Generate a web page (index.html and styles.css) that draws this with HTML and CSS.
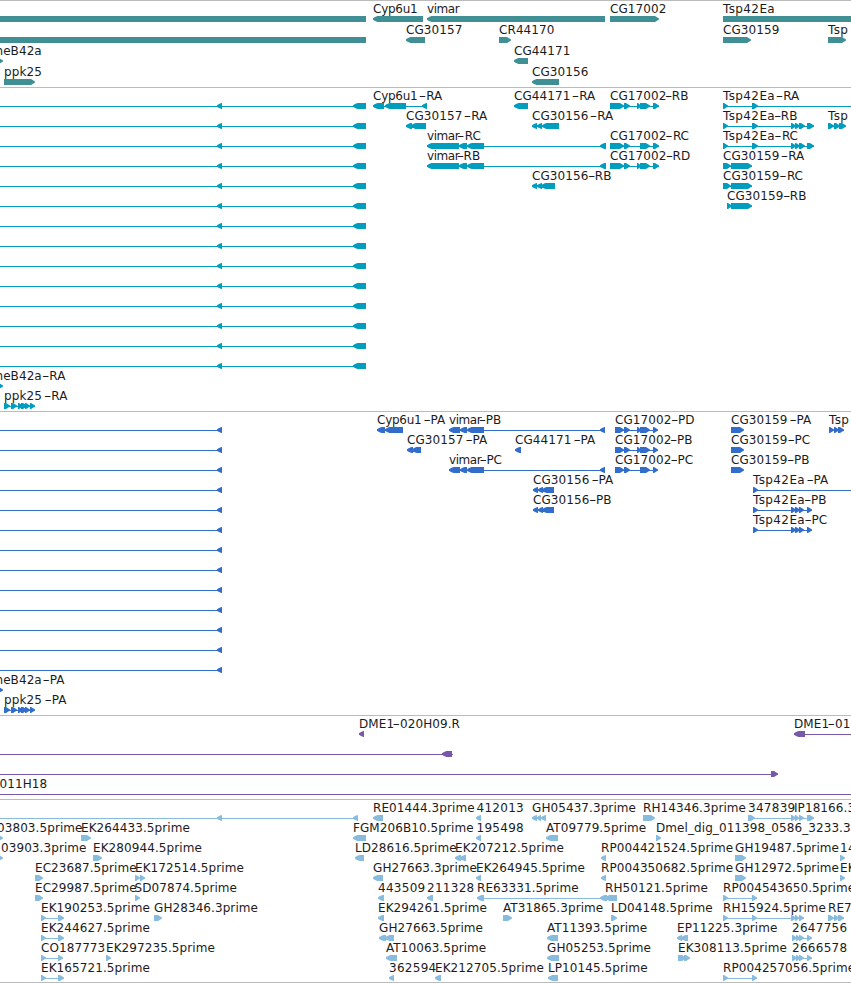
FILE: index.html
```html
<!DOCTYPE html>
<html lang="en">
<head>
<meta charset="utf-8">
<title>Genome browser</title>
<link rel="stylesheet" href="styles.css">
</head>
<body>
<main class="browser" id="browser"></main>
<script src="tracks.js"></script>
</body>
</html>
```

FILE: styles.css
```css
body {
  margin: 0;
  background: #fff;
}

.browser {
  display: flex;
  flex-direction: column;
  width: 851px;
  height: 983px;
  overflow: hidden;
}

.track {
  display: block;
  flex: none;
  box-sizing: border-box;
  width: 851px;
  border-top: 1px solid #bbb;
  overflow: hidden;
}

.track:last-child {
  border-bottom: 1px solid #bbb;
}

.track text {
  font: 12px "DejaVu Sans", sans-serif;
  fill: #1c1c1c;
  letter-spacing: 0.08px;
  white-space: pre;
}

.track .digits { letter-spacing: 0.28px; }
.track .tsp { letter-spacing: 0.38px; }
.track .vimar { letter-spacing: -0.45px; }
.track .cyp { letter-spacing: -0.25px; }
.track .suffix { letter-spacing: 0; text-anchor: end; }

.genes { color: #3f8f95; }
.transcripts { color: #009dbf; }
.proteins { color: #336dcc; }
.clones { color: #7759a8; }
.ests { color: #88bcde; }

.glyph { fill: currentColor; }
.intron { fill: currentColor; shape-rendering: crispEdges; }
```

FILE: tracks.js
```js
// Feature: [row, label, labelX, strand, exons, lineStart, lineEnd]
// strand: "<" reverse, ">" forward, "=" plain bar running off screen.
const A = 851;
const repeat = (n, make) => Array.from({ length: n }, (_, i) => make(i));
const ppk = [[4,10],[11,17],[18,23],[21,27],[25,30],[30,35]];
const cg17 = [[610,624],[624,630],[637,641],[640,650],[653,659]];
const cg17c = [[610,624],[624,630],[640,650],[653,659]];
const cg17p = [[615,624],[624,630],[637,641],[640,650],[653,658]];
const cg17pc = [[615,624],[624,630],[640,650],[653,658]];
const tsp = [[723,728],[752,758],[791,796],[795,800],[799,805],[807,814]];
const tspP = [[753,758],[791,796],[795,800],[799,804],[807,812]];
const vimar = [[427,459],[459,467],[467,484],[600,606]];
const vimarP = [[449,460],[460,467],[467,484],[600,605]];
const cg56p = [[533,538],[538,543],[542,554]];
const dist = [[792,797],[796,800],[799,804],[807,812]];

const tracks = [
  { name: "genes", height: 87, pitch: 21, features: [
    [0,"",0,"=",[[0,366]]],
    [0,"Cyp6u1",373,"<",[[373,423]]],
    [0,"vimar",427,"<",[[427,605]]],
    [0,"CG17002",610,">",[[610,659]]],
    [0,"Tsp42Ea",723,"=",[[723,A]]],
    [1,"",0,"=",[[0,366]]],
    [1,"CG30157",406,"<",[[406,425]]],
    [1,"CR44170",499,">",[[499,511]]],
    [1,"CG30159",723,">",[[723,751]]],
    [1,"Tsp",828,">",[[828,846]]],
    [2,"CheB42a",-13,">",[[-2,3]]],
    [2,"CG44171",514,"<",[[514,528]]],
    [3,"ppk25",4,">",[[4,35]]],
    [3,"CG30156",532,"<",[[532,559]]]
  ]},
  { name: "transcripts", height: 324, pitch: 20, features: [
    ...repeat(14, i => [i,"",0,"<",[[217,222],[353,366]],0,366]),
    [0,"Cyp6u1-RA",373,"<",[[373,384],[385,406],[422,427]]],
    [0,"CG44171-RA",514,"<",[[514,528]]],
    [0,"CG17002-RB",610,">",cg17],
    [0,"Tsp42Ea-RA",723,">",[[723,728],[752,758]],723,A],
    [1,"CG30157-RA",406,"<",[[406,412],[411,426]]],
    [1,"CG30156-RA",532,"<",[[532,537],[537,542],[542,559]]],
    [1,"Tsp42Ea-RB",723,">",tsp],
    [1,"Tsp",828,">",[[828,834],[834,840],[839,846]]],
    [2,"vimar-RC",427,"<",vimar],
    [2,"CG17002-RC",610,">",cg17c],
    [2,"Tsp42Ea-RC",723,">",tsp],
    [3,"vimar-RB",427,"<",vimar],
    [3,"CG17002-RD",610,">",cg17],
    [3,"CG30159-RA",723,">",[[723,731],[731,752]]],
    [4,"CG30156-RB",532,"<",[[532,537],[537,542],[541,555]]],
    [4,"CG30159-RC",723,">",[[723,731],[731,752]]],
    [5,"CG30159-RB",727,">",[[727,732],[731,752]]],
    [14,"CheB42a-RA",-13,">",[[-2,3]]],
    [15,"ppk25-RA",4,">",ppk]
  ]},
  { name: "proteins", height: 304, pitch: 20, features: [
    ...repeat(13, i => [i,"",0,"<",[[217,222]],0,222]),
    [0,"Cyp6u1-PA",377,"<",[[377,385],[385,403]]],
    [0,"vimar-PB",449,"<",vimarP],
    [0,"CG17002-PD",615,">",cg17p],
    [0,"CG30159-PA",731,">",[[731,744]]],
    [0,"Tsp",829,">",[[829,834],[834,839],[838,844]]],
    [1,"CG30157-PA",407,"<",[[407,413],[412,421]]],
    [1,"CG44171-PA",515,"<",[[515,521]]],
    [1,"CG17002-PB",615,">",cg17p],
    [1,"CG30159-PC",731,">",[[731,744]]],
    [2,"vimar-PC",449,"<",vimarP],
    [2,"CG17002-PC",615,">",cg17pc],
    [2,"CG30159-PB",731,">",[[731,744]]],
    [3,"CG30156-PA",533,"<",cg56p],
    [3,"Tsp42Ea-PA",753,">",[[753,758]],753,A],
    [4,"CG30156-PB",533,"<",cg56p],
    [4,"Tsp42Ea-PB",753,">",tspP],
    [5,"Tsp42Ea-PC",753,">",tspP],
    [13,"CheB42a-PA",-13,">",[[-2,3]]],
    [14,"ppk25-PA",4,">",ppk]
  ]},
  { name: "clones", height: 84, pitch: 20, features: [
    [0,"DME1-020H09.R",359,"<",[[359,364]]],
    [0,"DME1-01",794,"<",[[794,805]],794,A],
    [1,"",0,"<",[[442,452]],0,453],
    [2,"",0,">",[[771,778]],0,778],
    [3,"011H18",-0.5,"=",[],0,A]
  ]},
  { name: "ests", height: 184, pitch: 20, features: [
    [0,"",0,"<",[[217,222],[353,358]],0,358],
    [0,"RE01444.3prime",373,"<",[[373,383]]],
    [0,"412013",476.5,"<",[[476,481]]],
    [0,"GH05437.3prime",532,"<",[[532,537],[537,541],[541,546]]],
    [0,"RH14346.3prime",643,">",[[643,655]]],
    [0,"347839",748,">",[[748,755],[791,796],[795,799],[799,804],[807,814]]],
    [0,"IP18166.3",794,">",[]],
    [1,"03803.5prime",-3,">",[[-2,3]]],
    [1,"EK264433.5prime",81,">",[[81,91]]],
    [1,"FGM206B10.5prime",353,"<",[[353,366]]],
    [1,"195498",476.5,"<",[[476,481]]],
    [1,"AT09779.5prime",546,"<",[[546,558]]],
    [1,"Dmel_dig_011398_0586_3233.3",656,">",[[656,661]]],
    [2,"03903.3prime",1,">",[[-2,3]]],
    [2,"EK280944.5prime",93,">",[[93,102]]],
    [2,"LD28616.5prime",355,"<",[[355,364]]],
    [2,"EK207212.5prime",455,"<",[[455,461],[460,466]]],
    [2,"RP004421524.5prime",601,"<",[[601,606]]],
    [2,"GH19487.5prime",735,">",[[735,746]]],
    [2,"14",840,">",[[840,845]]],
    [3,"EC23687.5prime",35,">",[[35,43]]],
    [3,"EK172514.5prime",135,">",[[135,140],[140,145]]],
    [3,"GH27663.3prime",373,"<",[[373,383]]],
    [3,"EK264945.5prime",476,"<",[[476,481]]],
    [3,"RP004350682.5prime",601,"<",[[601,606]]],
    [3,"GH12972.5prime",735,">",[[735,746]]],
    [3,"EK",840,">",[[840,845]]],
    [4,"EC29987.5prime",35,">",[[35,43]]],
    [4,"SD07874.5prime",134.5,">",[[135,140]]],
    [4,"443509",378,"<",[[378,384]]],
    [4,"211328",427,"<",[[427,433]]],
    [4,"RE63331.5prime",477,"<",[[477,484],[600,607]]],
    [4,"RH50121.5prime",605,"<",[[605,617]]],
    [4,"RP004543650.5prime",723,">",[[723,728],[752,757]]],
    [5,"EK190253.5prime",41,">",[[41,46],[58,64]]],
    [5,"GH28346.3prime",154,">",[[154,162]]],
    [5,"EK294261.5prime",378,"<",[[378,384]]],
    [5,"AT31865.3prime",503,">",[[503,512]]],
    [5,"LD04148.5prime",611,">",[[611,617]]],
    [5,"RH15924.5prime",723,">",[[723,728],[752,757],[791,796],[795,799],[799,804]]],
    [5,"RE7",828,">",[[828,834],[834,839],[838,844]]],
    [6,"EK244627.5prime",41,">",[[41,46],[58,64]]],
    [6,"GH27663.5prime",379,"<",[[379,386],[385,394]]],
    [6,"AT11393.5prime",547,"<",[[547,558]]],
    [6,"EP11225.3prime",677,"<",[[677,682],[681,688]]],
    [6,"2647756",792,">",dist],
    [7,"CO187773",41,">",[[41,46],[58,63]]],
    [7,"EK297235.5prime",106,">",[[106,111]]],
    [7,"AT10063.5prime",386,"<",[[386,397]]],
    [7,"GH05253.5prime",547,"<",[[547,559]]],
    [7,"EK308113.5prime",678,">",[[678,686],[684,690]]],
    [7,"2666578",792,">",dist],
    [8,"EK165721.5prime",41,">",[[41,46],[58,64]]],
    [8,"362594",389,"<",[[389,394]]],
    [8,"EK212705.5prime",435,"<",[[435,441]]],
    [8,"LP10145.5prime",548,"<",[[548,558]]],
    [8,"RP004257056.5prime",723,">",[[723,728],[752,757]]]
  ]}
];

// Distance from label start to label end for hyphenated names.
const stemWidth = { Cyp6u1: 69, vimar: 54.8, CG17002: 80, CG44171: 81, CG30157: 81,
  CG30156: 81, CG30159: 81, Tsp42Ea: 76, CheB42a: 78.2, ppk25: 63.2 };
const suffixTrim = { RA: 0, RB: 1.8, RC: 1.2, RD: 0, PA: 1, PB: 2.8, PC: 2, PD: 0.8 };

// A six pixel tall exon whose rounded head points along the strand.
function exonPath(strand, [a, b], y) {
  const h = Math.min(5, b - a);
  if (strand === "<") {
    return `M${a} ${y + 2.2}L${a + h * 0.4} ${y + 1}L${a + h - 0.5} ${y}H${b}V${y + 6}H${a + h - 0.5}L${a + h * 0.4} ${y + 5}L${a} ${y + 3.8}Z`;
  }
  if (strand === ">") {
    return `M${a} ${y}H${b - h + 1}L${b - h * 0.4} ${y + 1.3}L${b} ${y + 2.4}V${y + 3.6}L${b - h * 0.4} ${y + 4.7}L${b - h + 1} ${y + 6}H${a}Z`;
  }
  return `M${a} ${y}H${b}V${y + 6}H${a}Z`;
}

function labelClass(label) {
  if (/^\d+$/.test(label)) return "digits";
  if (label.startsWith("Tsp")) return "tsp";
  if (label.startsWith("vimar")) return "vimar";
  if (label.startsWith("Cyp")) return "cyp";
  return "plain";
}

function drawLabel(label, x, y) {
  const cls = labelClass(label);
  const wide = hx => `<text x="${hx}" y="${y}" textLength="7.5" lengthAdjust="spacingAndGlyphs">-</text>`;
  const [stem, suffix] = label.split("-");
  if (!suffix) return `<text class="${cls}" x="${x}" y="${y}">${label}</text>`;
  if (stem === "DME1") {
    return `<text x="${x}" y="${y}">${stem}</text>${wide(x + 33.6)}<text x="${x + 41}" y="${y}">${suffix}</text>`;
  }
  const end = x + stemWidth[stem] + 0.2 - suffixTrim[suffix];
  const suffixWidth = { RA: 16.5, RB: 16.5, RC: 16.7, RD: 17.5, PA: 14.8, PB: 15.4, PC: 15.6, PD: 16.4 }[suffix];
  return `<text class="${cls}" x="${x}" y="${y}">${stem}</text>${wide(end - suffixWidth - 7)}` +
    `<text class="suffix" x="${end}" y="${y}">${suffix}</text>`;
}

function drawFeature([row, label, labelX, strand, exons, from, to], pitch) {
  // The track's one pixel top border sits above the drawing.
  const top = row * pitch - 1;
  const start = from ?? (exons.length ? exons[0][0] : 0);
  const end = to ?? (exons.length ? exons[exons.length - 1][1] : 0);
  let out = "";
  if (exons.length > 1 || from !== undefined) {
    out += `<rect class="intron" x="${start}" y="${top + 19}" width="${end - start}" height="1"/>`;
  }
  if (exons.length) {
    out += `<path class="glyph" d="${exons.map(e => exonPath(strand, e, top + 16)).join("")}"/>`;
  }
  if (label) out += drawLabel(label, labelX, top + 13);
  return out;
}

document.getElementById("browser").innerHTML = tracks.map(t =>
  `<svg class="track ${t.name}" height="${t.height}">${
    t.features.map(f => drawFeature(f, t.pitch)).join("")}</svg>`).join("");
```
